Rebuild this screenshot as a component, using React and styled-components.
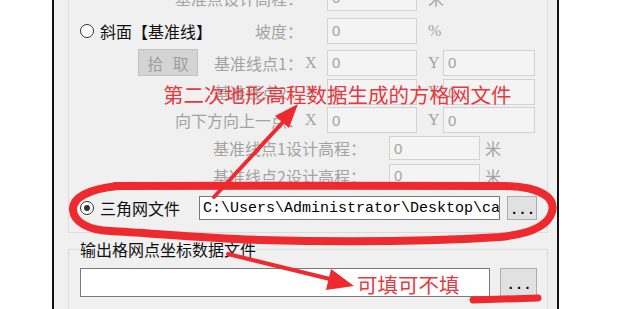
import styled, { createGlobalStyle } from 'styled-components';

const GlobalStyle = createGlobalStyle`
  *, *::before, *::after { box-sizing: border-box; }
  html, body { margin: 0; padding: 0; background: #fff; }
  body { font-family: "Noto Sans CJK SC", "Liberation Sans", sans-serif; }
`;

const STD_COLS = '223px 24px 90px 26px 92px';
const ELEV_COLS = '286px 23px 91px 1fr';

const App = () => {
  return (
    <Stage>
      <GlobalStyle />
      <Dialog>
        <GroupBox>
          <Row $cols={STD_COLS} $h={33}>
            <Cell $justify="flex-end">
              <Label $muted>基准点设计高程：</Label>
            </Cell>
            <span />
            <Field disabled defaultValue="0" />
            <Cell $pad={11}>
              <Label $muted>米</Label>
            </Cell>
          </Row>
          <Row $cols={STD_COLS} $h={33}>
            <Cell $justify="space-between">
              <Choice>
                <Radio />
                <Label>斜面【基准线】</Label>
              </Choice>
              <Label $muted>坡度：</Label>
            </Cell>
            <span />
            <Field disabled defaultValue="0" />
            <Cell $pad={11}>
              <Axis>%</Axis>
            </Cell>
          </Row>
          <Row $cols={STD_COLS} $h={31}>
            <Cell $justify="space-between">
              <PickButton disabled>拾 取</PickButton>
              <Label $muted>基准线点1：</Label>
            </Cell>
            <Cell $pad={2}>
              <Axis>X</Axis>
            </Cell>
            <Field disabled defaultValue="0" />
            <Cell $pad={11}>
              <Axis>Y</Axis>
            </Cell>
            <Field disabled defaultValue="0" />
          </Row>
          <Row $cols={STD_COLS} $h={28}>
            <Cell $justify="flex-end">
              <Label $muted>基准线点2：</Label>
            </Cell>
            <Cell $pad={2}>
              <Axis>X</Axis>
            </Cell>
            <Field disabled defaultValue="0" />
            <Cell $pad={11}>
              <Axis>Y</Axis>
            </Cell>
            <Field disabled defaultValue="0" />
          </Row>
          <Row $cols={STD_COLS} $h={28}>
            <Cell $justify="flex-end">
              <Label $muted>向下方向上一点：</Label>
            </Cell>
            <Cell $pad={2}>
              <Axis>X</Axis>
            </Cell>
            <Field disabled defaultValue="0" />
            <Cell $pad={11}>
              <Axis>Y</Axis>
            </Cell>
            <Field disabled defaultValue="0" />
          </Row>
          <Row $cols={ELEV_COLS} $h={28}>
            <Cell $justify="flex-end">
              <Label $muted>基准线点1设计高程：</Label>
            </Cell>
            <span />
            <Field disabled defaultValue="0" $h={24} />
            <Cell $pad={5}>
              <Label $muted>米</Label>
            </Cell>
          </Row>
          <Row $cols={ELEV_COLS} $h={27}>
            <Cell $justify="flex-end">
              <Label $muted>基准线点2设计高程：</Label>
            </Cell>
            <span />
            <Field disabled defaultValue="0" $h={24} />
            <Cell $pad={5}>
              <Label $muted>米</Label>
            </Cell>
          </Row>
          <FileRow>
            <Choice>
              <Radio $checked />
              <Label>三角网文件</Label>
            </Choice>
            <PathField
              readOnly
              defaultValue="C:\Users\Administrator\Desktop\cad\tin.dat"
            />
            <BrowseButton $w={30} $h={24} $gap={7}>...</BrowseButton>
          </FileRow>
        </GroupBox>

        <OutputBox>
          <Legend>输出格网点坐标数据文件</Legend>
          <OutputRow>
            <OutputField readOnly defaultValue="" />
            <BrowseButton $w={37} $h={29} $gap={10}>...</BrowseButton>
          </OutputRow>
        </OutputBox>
      </Dialog>

      <Marks viewBox="0 0 620 309">
        <path
          d="M 115 186 C 200 185, 400 186, 505 186 C 540 187, 556 197, 552 212 C 548 226, 530 234, 500 237 C 420 242, 330 242, 260 240 C 200 238, 150 233, 110 231 C 88 230, 74 222, 73 210 C 72 198, 88 189, 118 186"
          stroke="#ee2a2e"
          strokeWidth="8"
          fill="none"
          strokeLinecap="round"
          strokeLinejoin="round"
        />
        <line x1="214" y1="197" x2="284" y2="121" stroke="#ee2a2e" strokeWidth="4" strokeLinecap="round" />
        <polygon points="298,104 289,128 275,116" fill="#ee2a2e" />
        <line x1="228" y1="254" x2="334" y2="280" stroke="#ee2a2e" strokeWidth="4" strokeLinecap="round" />
        <polygon points="354,286 326,290 331,269" fill="#ee2a2e" />
        <line x1="473" y1="300" x2="538" y2="298" stroke="#ee2a2e" strokeWidth="7" strokeLinecap="round" />
      </Marks>
      <Note $x={163} $y={82}>第二次地形高程数据生成的方格网文件</Note>
      <Note $x={357} $y={272}>可填可不填</Note>
    </Stage>
  );
};

const Stage = styled.div`
  position: relative;
  width: 620px;
  height: 309px;
  overflow: hidden;
  background: #fff;
`;

const Dialog = styled.div`
  display: flex;
  flex-direction: column;
  margin-left: 52px;
  width: 507px;
  height: 100%;
  padding-left: 14px;
  border-left: 2px solid #111;
  border-right: 2px solid #111;
  background: #f0f0f0;
`;

const GroupBox = styled.div`
  margin-top: -40px;
  width: 480px;
  padding: 20px 0 5px 11px;
  border: 1px solid #dcdcdc;
`;

const Row = styled.div`
  display: grid;
  grid-template-columns: ${(p) => p.$cols};
  align-items: center;
  height: ${(p) => p.$h}px;
`;

const Cell = styled.div`
  display: flex;
  align-items: center;
  justify-content: ${(p) => p.$justify || 'flex-start'};
  padding-left: ${(p) => p.$pad || 0}px;
  height: 100%;
`;

const Choice = styled.div`
  display: flex;
  align-items: center;
`;

const Radio = styled.span`
  display: inline-flex;
  align-items: center;
  justify-content: center;
  width: 14px;
  height: 14px;
  margin-right: 6px;
  border: 1px solid #333;
  border-radius: 50%;
  background: #fff;

  &::after {
    content: '';
    width: 6px;
    height: 6px;
    border-radius: 50%;
    background: ${(p) => (p.$checked ? '#333' : 'transparent')};
  }
`;

const Label = styled.span`
  font-size: 16px;
  line-height: 20px;
  white-space: nowrap;
  color: ${(p) => (p.$muted ? '#a3a3a3' : '#111')};
`;

const Axis = styled.span`
  font-family: "Liberation Serif", serif;
  font-size: 16px;
  line-height: 20px;
  color: #a3a3a3;
`;

const Field = styled.input`
  width: 100%;
  height: ${(p) => p.$h || 26}px;
  margin: 0;
  padding: 0 0 0 4px;
  border: 1px solid #d2d2d2;
  border-radius: 0;
  background: #f4f4f4;
  color: #a3a3a3;
  -webkit-text-fill-color: #a3a3a3;
  font: 15px "Liberation Sans", sans-serif;
  outline: none;
`;

const PickButton = styled.button`
  width: 60px;
  height: 27px;
  margin-left: 58px;
  padding: 0 0 0 3px;
  border: 1px solid #c4c4c4;
  background: #d4d4d4;
  color: #a0a0a0;
  font: 16px "Noto Sans CJK SC", sans-serif;
  letter-spacing: 3px;
`;

const FileRow = styled.div`
  display: flex;
  align-items: center;
  height: 38px;
`;

const PathField = styled.input`
  width: 301px;
  height: 24px;
  margin: 0 0 0 19px;
  padding: 0 0 0 3px;
  border: 1px solid #7a7a7a;
  border-radius: 0;
  background: #fff;
  color: #000;
  font: 15px "Liberation Mono", monospace;
  outline: none;
`;

const BrowseButton = styled.button`
  width: ${(p) => p.$w}px;
  height: ${(p) => p.$h}px;
  margin-left: ${(p) => p.$gap}px;
  padding: 4px 0 0 1px;
  border: 1px solid #adadad;
  background: #e1e1e1;
  color: #000;
  font: bold 14px "Liberation Mono", monospace;
  letter-spacing: 0;
`;

const OutputBox = styled.fieldset`
  margin: 7px 0 0 0;
  width: 480px;
  min-width: 0;
  padding: 10px 0 20px 11px;
  border: 1px solid #dcdcdc;
`;

const Legend = styled.legend`
  padding: 0;
  font-size: 16px;
  line-height: 18px;
  color: #111;
`;

const OutputRow = styled.div`
  display: flex;
  align-items: center;
`;

const OutputField = styled.input`
  width: 410px;
  height: 29px;
  margin: 0;
  padding: 0 0 0 3px;
  border: 1px solid #7a7a7a;
  border-radius: 0;
  background: #fff;
  outline: none;
`;

const Marks = styled.svg`
  position: absolute;
  left: 0;
  top: 0;
  width: 620px;
  height: 309px;
  pointer-events: none;
`;

const Note = styled.span`
  position: absolute;
  left: ${(p) => p.$x}px;
  top: ${(p) => p.$y}px;
  font-family: "Noto Sans CJK SC", sans-serif;
  font-size: 20.5px;
  line-height: 24px;
  color: #e8383d;
  white-space: nowrap;
`;

export default App;
